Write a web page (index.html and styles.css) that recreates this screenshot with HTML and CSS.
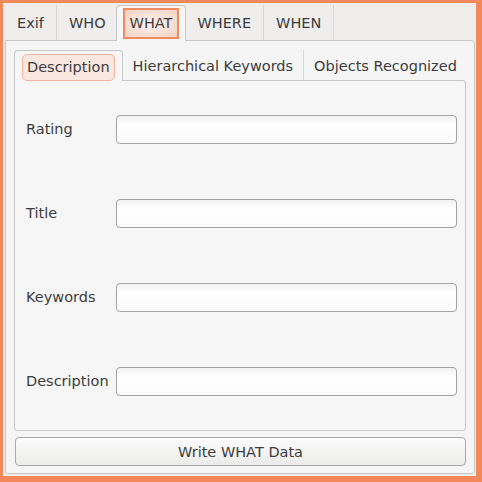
FILE: index.html
```html
<!DOCTYPE html>
<html lang="en">
<head>
    <meta charset="UTF-8">
    <meta name="viewport" content="width=device-width, initial-scale=1.0">
    <title>Photo Metadata</title>
    <link rel="stylesheet" href="styles.css">
</head>
<body>

    <div class="window">
        <div class="tabs">
            <div class="tab">Exif</div>
            <div class="tab">WHO</div>
            <div class="tab active"><span class="focus">WHAT</span></div>
            <div class="tab">WHERE</div>
            <div class="tab">WHEN</div>
        </div>

        <div class="pane">
            <div class="subtabs">
                <div class="subtab active"><span class="focus">Description</span></div>
                <div class="subtab">Hierarchical Keywords</div>
                <div class="subtab">Objects Recognized</div>
            </div>

            <div class="subpane">
                <form class="form">
                    <label for="rating">Rating</label>
                    <input type="text" id="rating" name="rating">

                    <label for="title">Title</label>
                    <input type="text" id="title" name="title">

                    <label for="keywords">Keywords</label>
                    <input type="text" id="keywords" name="keywords">

                    <label for="description">Description</label>
                    <input type="text" id="description" name="description">
                </form>
            </div>

            <button type="button" class="write">Write WHAT Data</button>
        </div>
    </div>

</body>
</html>
```

FILE: styles.css
```css
body {
    margin: 0;
    padding: 3px 6px 6px 3px;
    background-color: #f2885c;
    font-family: "DejaVu Sans", sans-serif;
    font-size: 14.5px;
    color: #3c3c3c;
}

.window {
    width: 470px;
    height: 469px;
    padding: 2px 1px 2px 2px;
    background-color: #efeeec;
    display: flex;
    flex-direction: column;
}

/* top level tabs */
.tabs {
    display: flex;
    height: 35px;
}

.tab {
    display: flex;
    align-items: center;
    padding: 1px 12px 0;
    border-right: 1px solid #d9d8d6;
    white-space: nowrap;
}

.tab.active {
    position: relative;
    z-index: 1;
    margin: 0 -1px -1px -3px;
    padding: 0 6px;
    background-color: #f6f6f6;
    border: 1px solid #c6c6c6;
    border-bottom: none;
    border-radius: 4px 4px 0 0;
}

.tab .focus {
    padding: 5px 5px 6px;
    border: 2px solid #f08a60;
    background: radial-gradient(ellipse at center, #fbece6 20%, #f4d2c3 100%);
}

.pane {
    flex: 1;
    display: flex;
    flex-direction: column;
    padding: 9px 8px 7px 8px;
    background-color: #f5f5f5;
    border: 1px solid #c6c6c6;
    border-radius: 0 4px 3px 3px;
}

/* inner tabs */
.subtabs {
    display: flex;
    height: 30px;
}

.subtab {
    display: flex;
    align-items: center;
    flex-shrink: 0;
    padding: 2px 10px 0;
    border-right: 1px solid #d9d8d6;
    white-space: nowrap;
}

.subtab:last-child {
    border-right: none;
}

.subtab.active {
    position: relative;
    z-index: 1;
    margin-bottom: -1px;
    padding: 2px 7px 0;
    background-color: #f6f6f6;
    border: 1px solid #c8c8c8;
    border-bottom: none;
    border-radius: 4px 4px 0 0;
}

.subtab .focus {
    padding: 4px 4px 5px;
    border: 1px solid #f3b49b;
    border-radius: 5px;
    background-color: #fae7e0;
}

.subpane {
    height: 349px;
    background-color: #f6f6f6;
    border: 1px solid #c8c8c8;
    border-radius: 0 3px 3px 3px;
}

.form {
    display: grid;
    grid-template-columns: auto 1fr;
    grid-auto-rows: 84px;
    column-gap: 7px;
    align-items: center;
    padding: 6px 8px 6px 11px;
    margin: 0;
}

.form input {
    height: 29px;
    box-sizing: border-box;
    border: 1px solid #a3a3a3;
    border-radius: 4px;
    background: linear-gradient(#f2f2f2, #ffffff 35%, #fbfbfb);
    font-family: inherit;
    font-size: 14.5px;
}

.write {
    margin: 6px 0 0 1px;
    height: 29px;
    border: 1px solid #a9a9a9;
    border-radius: 4px;
    background: linear-gradient(#fcfcfc, #ebebea);
    font-family: inherit;
    font-size: 14.5px;
    color: #3c3c3c;
}
```
